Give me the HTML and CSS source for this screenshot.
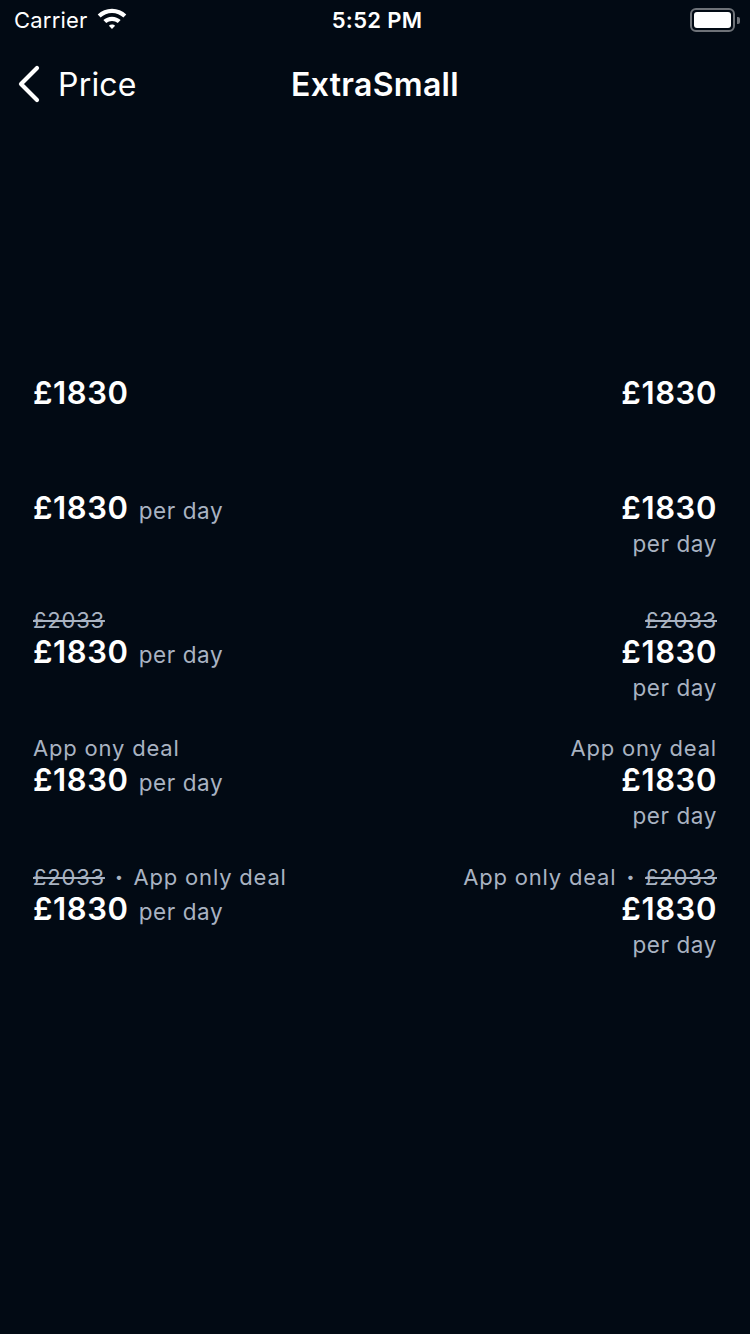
FILE: index.html
```html
<!DOCTYPE html>
<html lang="en">
<head>
<meta charset="utf-8">
<title>ExtraSmall</title>
<link rel="stylesheet" href="styles.css">
</head>
<body>
<div class="screen">
  <div class="status-bar">
    <div class="status-left">
      <span class="carrier">Carrier</span>
      <svg class="wifi" width="30" height="22" viewBox="2.5 3 25 18">
        <path d="M15 3.5c4.6 0 8.8 1.8 11.9 4.7l-2.4 2.5C22 8.3 18.7 6.9 15 6.9S8 8.3 5.5 10.7L3.1 8.2C6.2 5.3 10.4 3.5 15 3.5z" fill="#fff"/>
        <path d="M15 10.1c2.8 0 5.3 1.1 7.2 2.8l-2.4 2.5c-1.3-1.1-3-1.8-4.8-1.8s-3.5.7-4.8 1.8l-2.4-2.5c1.9-1.7 4.4-2.8 7.2-2.8z" fill="#fff"/>
        <path d="M15 16.6c1 0 1.9.4 2.6 1L15 20.3l-2.6-2.7c.7-.6 1.6-1 2.6-1z" fill="#fff"/>
      </svg>
    </div>
    <div class="status-time">5:52 PM</div>
    <div class="status-right">
      <div class="battery"><div class="battery-fill"></div></div>
      <div class="battery-cap"></div>
    </div>
  </div>

  <div class="nav-bar">
    <div class="nav-back">
      <svg class="chevron" width="26" height="38" viewBox="0 0 26 38">
        <path d="M21 3 L5 19 L21 35" fill="none" stroke="#fff" stroke-width="4.2" stroke-linecap="round" stroke-linejoin="round"/>
      </svg>
      <span class="back-label">Price</span>
    </div>
    <div class="nav-title">ExtraSmall</div>
    <div class="nav-spacer"></div>
  </div>

  <div class="content">
    <div class="row row-1">
      <div class="col col-left">
        <div class="price-line"><span class="price">£1830</span></div>
      </div>
      <div class="col col-right">
        <div class="price-line"><span class="price">£1830</span></div>
      </div>
    </div>

    <div class="row row-2">
      <div class="col col-left">
        <div class="price-line"><span class="price">£1830</span><span class="unit">per day</span></div>
      </div>
      <div class="col col-right">
        <div class="price-line"><span class="price">£1830</span></div>
        <div class="unit-line">per day</div>
      </div>
    </div>

    <div class="row row-3">
      <div class="col col-left">
        <div class="meta-line"><s class="old">£2033</s></div>
        <div class="price-line"><span class="price">£1830</span><span class="unit">per day</span></div>
      </div>
      <div class="col col-right">
        <div class="meta-line"><s class="old">£2033</s></div>
        <div class="price-line"><span class="price">£1830</span></div>
        <div class="unit-line">per day</div>
      </div>
    </div>

    <div class="row row-4">
      <div class="col col-left">
        <div class="meta-line">App ony deal</div>
        <div class="price-line"><span class="price">£1830</span><span class="unit">per day</span></div>
      </div>
      <div class="col col-right">
        <div class="meta-line">App ony deal</div>
        <div class="price-line"><span class="price">£1830</span></div>
        <div class="unit-line">per day</div>
      </div>
    </div>

    <div class="row row-5">
      <div class="col col-left">
        <div class="meta-line"><s class="old">£2033</s><span class="dot">•</span>App only deal</div>
        <div class="price-line"><span class="price">£1830</span><span class="unit">per day</span></div>
      </div>
      <div class="col col-right">
        <div class="meta-line">App only deal<span class="dot">•</span><s class="old">£2033</s></div>
        <div class="price-line"><span class="price">£1830</span></div>
        <div class="unit-line">per day</div>
      </div>
    </div>
  </div>
</div>
</body>
</html>
```

FILE: styles.css
```css
html, body {
  margin: 0;
  padding: 0;
  background: #020a14;
}

body {
  font-family: Inter, "Noto Sans", "Liberation Sans", sans-serif;
  color: #ffffff;
}

.screen {
  width: 750px;
  height: 1334px;
  background: #020a14;
  display: flex;
  flex-direction: column;
  overflow: hidden;
}

/* Status bar */
.status-bar {
  height: 40px;
  display: flex;
  align-items: center;
  justify-content: space-between;
  padding: 0 10px 0 14px;
}

.status-left {
  display: flex;
  align-items: center;
  gap: 9px;
  width: 200px;
}

.carrier {
  font-size: 22px;
  line-height: 40px;
  font-weight: 400;
  letter-spacing: 0.2px;
}

.wifi {
  display: block;
  margin-top: -2px;
}

.status-time {
  font-size: 22px;
  font-weight: 600;
  line-height: 40px;
  letter-spacing: 0.3px;
}

.status-right {
  width: 200px;
  display: flex;
  justify-content: flex-end;
  align-items: center;
  gap: 2px;
}

.battery {
  width: 37px;
  height: 16px;
  border: 2.5px solid #6e7278;
  border-radius: 6px;
  padding: 2px;
  display: flex;
}

.battery-fill {
  flex: 1;
  background: #ffffff;
  border-radius: 3px;
}

.battery-cap {
  width: 3px;
  height: 7px;
  background: #6e7278;
  border-radius: 0 2px 2px 0;
}

/* Nav bar */
.nav-bar {
  height: 88px;
  display: flex;
  align-items: center;
  justify-content: space-between;
  padding: 0 16px 0 16px;
}

.nav-back {
  width: 200px;
  display: flex;
  align-items: center;
  gap: 16px;
}

.chevron {
  display: block;
}

.back-label {
  font-size: 32px;
  font-weight: 400;
  letter-spacing: 0.2px;
}

.nav-title {
  font-size: 32px;
  font-weight: 600;
  letter-spacing: 0.3px;
}

.nav-spacer {
  width: 200px;
}

/* Content */
.content {
  display: flex;
  flex-direction: column;
  padding: 248px 33px 0 33px;
}

.row {
  display: flex;
  justify-content: space-between;
  align-items: flex-start;
}

.row-2 { margin-top: 81px; }
.row-3 { margin-top: 46px; }
.row-4 { margin-top: 30px; }
.row-5 { margin-top: 31px; }

.col {
  display: flex;
  flex-direction: column;
}

.col-left { align-items: flex-start; }
.col-right { align-items: flex-end; text-align: right; }

.price-line {
  font-size: 31px;
  line-height: 34px;
  white-space: nowrap;
}

.price {
  font-weight: 600;
  color: #ffffff;
  letter-spacing: 0.6px;
}

.unit {
  font-size: 22.5px;
  line-height: 1;
  font-weight: 400;
  color: #a9b3c2;
  margin-left: 10px;
  letter-spacing: 0.6px;
}

.unit-line {
  margin-top: 4px;
  font-size: 22.5px;
  line-height: 30px;
  color: #a9b3c2;
  letter-spacing: 0.6px;
}

.meta-line {
  font-size: 22px;
  line-height: 30px;
  color: #a9b3c2;
  white-space: nowrap;
  letter-spacing: 0.8px;
}

.old {
  text-decoration: line-through;
  text-decoration-thickness: 2px;
}

.dot {
  font-size: 14px;
  line-height: 1;
  margin: 0 10px;
  vertical-align: 3px;
}
```
